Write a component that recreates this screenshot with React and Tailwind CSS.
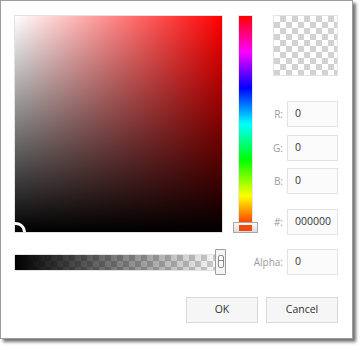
const checker =
  'bg-[conic-gradient(#d2d2d2_25%,#ffffff_0_50%,#d2d2d2_0_75%,#ffffff_0)] bg-size-[12px_12px]'

function Field({ label, value, className = '' }) {
  return (
    <div className={`flex items-center justify-end ${className}`}>
      <span className="mr-[4px] text-[10px] text-[#9a9a9a]">{label}</span>
      <div className="flex h-[26px] w-[51px] items-center border border-[#e2e2e2] bg-[#fbfbfb] pl-[7px] text-[10.5px] text-[#333]">
        {value}
      </div>
    </div>
  )
}

function Button({ children }) {
  return (
    <button className="flex h-[26px] w-[72px] items-center justify-center border border-[#dadada] bg-[#f6f6f6] text-[10.5px] text-[#333]">
      {children}
    </button>
  )
}

export default function App() {
  return (
    <div className="min-h-[350px] bg-white" style={{ fontFamily: '"Open Sans", "Noto Sans", sans-serif' }}>
      <div className="flex h-[339px] w-[353px] flex-col border border-[#9c9c9c] bg-white pl-[13px] pr-[14px] pt-[14px] shadow-[3px_3px_3px_rgba(0,0,0,0.55)]">
        {/* Picker row */}
        <div className="flex">
          <div className="relative h-[218px] w-[209px] overflow-hidden border border-[#e2e2e2] bg-[linear-gradient(to_top,#000,transparent),linear-gradient(to_right,#fff,#f00)]">
            <div className="absolute left-[-9px] bottom-[-10px] h-[20px] w-[20px] rounded-full border-[3px] border-white shadow-[0_0_0_1px_#000]" />
          </div>

          <div className="relative ml-[15px] h-[218px] w-[15px] border border-[#e6e6e6] bg-[linear-gradient(to_bottom,#f00_0%,#f0f_16.67%,#00f_33.33%,#0ff_50%,#0f0_66.67%,#ff0_83.33%,#f00_100%)]">
            <div className="absolute left-[-6px] top-[206px] flex h-[11px] w-[25px] items-center justify-center border border-[#a8a8a8] bg-[linear-gradient(to_bottom,#fafafa,#dcdcdc)]">
              <div className="h-[6px] w-[13px] bg-[#f24a0a]" />
            </div>
          </div>

          <div className="ml-[20px] flex w-[65px] flex-col">
            <div className={`h-[61px] w-[65px] border border-[#e4e4e4] ${checker}`} />
            <Field label="R:" value="0" className="mt-[25px]" />
            <Field label="G:" value="0" className="mt-[8px]" />
            <Field label="B:" value="0" className="mt-[7px]" />
            <Field label="#:" value="000000" className="mt-[15px]" />
          </div>
        </div>

        {/* Alpha row */}
        <div className="mt-[14px] flex items-center justify-between">
          <div className="relative h-[17px] w-[209px]">
            <div className={`h-full w-full border border-[#e2e2e2] ${checker}`}>
              <div className="h-full w-full bg-[linear-gradient(to_right,#000,transparent)]" />
            </div>
            <div className="absolute right-[-3px] top-[-5px] flex h-[26px] w-[11px] items-center justify-center rounded-[1px] border border-[#9c9c9c] bg-[#f4f4f4]">
              <div className="flex h-[13px] w-[6px] flex-col justify-between rounded-[2px] border border-[#8c8c8c] bg-white py-[1px]">
                <div className="h-[4px] w-full border-b border-[#8c8c8c]" />
              </div>
            </div>
          </div>
          <Field label="Alpha:" value="0" />
        </div>

        {/* Buttons */}
        <div className="mt-[22px] flex justify-end gap-[8px]">
          <Button>OK</Button>
          <Button>Cancel</Button>
        </div>
      </div>
    </div>
  )
}
